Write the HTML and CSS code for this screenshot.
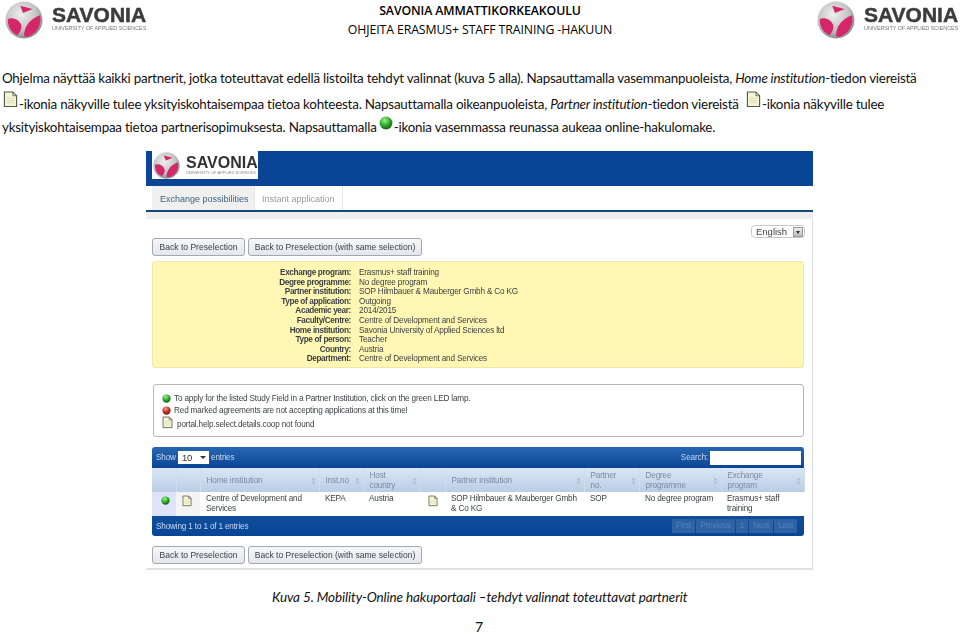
FILE: index.html
```html
<!DOCTYPE html>
<html lang="fi">
<head>
<meta charset="utf-8">
<title>Ohjeita Erasmus+ staff training</title>
<link rel="stylesheet" href="styles.css">
</head>
<body>
<svg class="defs" width="0" height="0" aria-hidden="true">
  <defs>
    <radialGradient id="ball" cx="42%" cy="35%" r="70%">
      <stop offset="0" stop-color="#eeeeee"/>
      <stop offset="0.6" stop-color="#c4c4c4"/>
      <stop offset="1" stop-color="#7f7f7f"/>
    </radialGradient>
    <radialGradient id="led" cx="40%" cy="30%" r="70%">
      <stop offset="0" stop-color="#a5f08a"/>
      <stop offset="0.55" stop-color="#2fae2f"/>
      <stop offset="1" stop-color="#14601f"/>
    </radialGradient>
    <radialGradient id="ledred" cx="40%" cy="30%" r="70%">
      <stop offset="0" stop-color="#f0a090"/>
      <stop offset="0.55" stop-color="#c8362a"/>
      <stop offset="1" stop-color="#701a14"/>
    </radialGradient>
    <symbol id="globe" viewBox="0 0 40 40">
      <circle cx="20" cy="20" r="19.5" fill="url(#ball)"/>
      <path d="M16 5 L29 8.500 L19 12.500 Z" fill="#d6266a"/>
      <path d="M3 19 C8 17 14 19 17 25 C18 29 16 33 13 36 C6 33 2.500 26 3 19 Z" fill="#d6266a"/>
      <path d="M20 37 C20 27 26 19 37 15 C39 24 34 34 24 37.500 Z" fill="#d6266a"/>
    </symbol>
    <symbol id="doc" viewBox="0 0 16 18">
      <path d="M1.500 1 H10.500 L14.500 5 V16.500 H1.500 Z" fill="#f6f5d8" stroke="#55564c" stroke-width="1.200"/>
      <path d="M10.500 1 V5 H14.500 Z" fill="#d8d8b0" stroke="#55564c" stroke-width="0.800"/>
      <path d="M3.500 7.500 H12 M3.500 10 H12 M3.500 12.500 H12" stroke="#d4d3a8" stroke-width="0.800"/>
    </symbol>
    <symbol id="lamp" viewBox="0 0 12 12">
      <circle cx="6" cy="6" r="5.500" fill="url(#led)"/>
    </symbol>
    <symbol id="lampred" viewBox="0 0 12 12">
      <circle cx="6" cy="6" r="5.500" fill="url(#ledred)"/>
    </symbol>
    <symbol id="sort" viewBox="0 0 6 9">
      <path d="M3 0.500 L5.500 3.500 H0.500 Z M3 8.500 L5.500 5.500 H0.500 Z" fill="#a9bcd2"/>
    </symbol>
  </defs>
</svg>

<header class="doc-header">
  <div class="logo">
    <svg class="globe"><use href="#globe"/></svg>
    <div class="logo-text">
      <span class="logo-name">SAVONIA</span>
      <span class="logo-sub">UNIVERSITY OF APPLIED SCIENCES</span>
    </div>
  </div>
  <div class="doc-title">
    <div class="doc-title-main">SAVONIA AMMATTIKORKEAKOULU</div>
    <div class="doc-title-sub">OHJEITA ERASMUS+ STAFF TRAINING -HAKUUN</div>
  </div>
  <div class="logo">
    <svg class="globe"><use href="#globe"/></svg>
    <div class="logo-text">
      <span class="logo-name">SAVONIA</span>
      <span class="logo-sub">UNIVERSITY OF APPLIED SCIENCES</span>
    </div>
  </div>
</header>

<main class="doc-body">
  <p class="intro">
    <span class="line">Ohjelma näyttää kaikki partnerit, jotka toteuttavat edellä listoilta tehdyt valinnat (kuva 5 alla). Napsauttamalla vasemmanpuoleista, <em>Home institution</em>-tiedon viereistä</span>
    <span class="line"><svg class="icon-doc first"><use href="#doc"/></svg>-ikonia näkyville tulee yksityiskohtaisempaa tietoa kohteesta. Napsauttamalla oikeanpuoleista, <em>Partner institution</em>-tiedon viereistä <svg class="icon-doc second"><use href="#doc"/></svg>-ikonia näkyville tulee</span>
    <span class="line">yksityiskohtaisempaa tietoa partnerisopimuksesta. Napsauttamalla <svg class="icon-lamp"><use href="#lamp"/></svg>-ikonia vasemmassa reunassa aukeaa online-hakulomake.</span>
  </p>

  <figure class="figure">
    <div class="shot">
      <div class="shot-banner">
        <div class="shot-logo">
          <svg class="shot-globe"><use href="#globe"/></svg>
          <div class="shot-logo-text">
            <span class="shot-logo-name">SAVONIA</span>
            <span class="shot-logo-sub">UNIVERSITY OF APPLIED SCIENCES</span>
          </div>
        </div>
      </div>
      <nav class="tabs">
        <span class="tab tab-active">Exchange possibilities</span>
        <span class="tab">Instant application</span>
      </nav>
      <div class="tab-rule"></div>

      <div class="panel">
        <div class="lang-row">
          <div class="lang"><span>English</span><span class="lang-btn"></span></div>
        </div>
        <div class="buttons buttons-top">
          <span class="btn btn-a">Back to Preselection</span>
          <span class="btn btn-b">Back to Preselection (with same selection)</span>
        </div>

        <dl class="summary">
          <dt>Exchange program:</dt><dd>Erasmus+ staff training</dd>
          <dt>Degree programme:</dt><dd>No degree program</dd>
          <dt>Partner institution:</dt><dd>SOP Hilmbauer &amp; Mauberger Gmbh &amp; Co KG</dd>
          <dt>Type of application:</dt><dd>Outgoing</dd>
          <dt>Academic year:</dt><dd>2014/2015</dd>
          <dt>Faculty/Centre:</dt><dd>Centre of Development and Services</dd>
          <dt>Home institution:</dt><dd>Savonia University of Applied Sciences ltd</dd>
          <dt>Type of person:</dt><dd>Teacher</dd>
          <dt>Country:</dt><dd>Austria</dd>
          <dt>Department:</dt><dd>Centre of Development and Services</dd>
        </dl>

        <div class="legend">
          <div class="legend-row"><svg class="legend-lamp"><use href="#lamp"/></svg>To apply for the listed Study Field in a Partner Institution, click on the green LED lamp.</div>
          <div class="legend-row"><svg class="legend-lamp"><use href="#lampred"/></svg>Red marked agreements are not accepting applications at this time!</div>
          <div class="legend-row legend-doc"><svg class="legend-docicon"><use href="#doc"/></svg>portal.help.select.details.coop not found</div>
        </div>

        <div class="datatable">
          <div class="dt-top">
            <div class="dt-show">Show <span class="dt-select">10<span class="dt-caret"></span></span> entries</div>
            <div class="dt-search">Search: <span class="dt-input"></span></div>
          </div>
          <table class="dt">
            <colgroup>
              <col class="c1"><col class="c2"><col class="c3"><col class="c4"><col class="c5"><col class="c6"><col class="c7"><col class="c8"><col class="c9"><col class="c10">
            </colgroup>
            <thead>
              <tr>
                <th></th><th></th>
                <th><div class="th-in"><span>Home institution</span><svg class="sort"><use href="#sort"/></svg></div></th>
                <th><div class="th-in"><span>Inst.no</span><svg class="sort"><use href="#sort"/></svg></div></th>
                <th><div class="th-in"><span>Host<br>country</span><svg class="sort"><use href="#sort"/></svg></div></th>
                <th></th>
                <th><div class="th-in"><span>Partner institution</span><svg class="sort"><use href="#sort"/></svg></div></th>
                <th><div class="th-in"><span>Partner<br>no.</span><svg class="sort"><use href="#sort"/></svg></div></th>
                <th><div class="th-in"><span>Degree<br>programme</span><svg class="sort"><use href="#sort"/></svg></div></th>
                <th><div class="th-in"><span>Exchange<br>program</span><svg class="sort"><use href="#sort"/></svg></div></th>
              </tr>
            </thead>
            <tbody>
              <tr>
                <td class="td-lamp"><svg class="row-lamp"><use href="#lamp"/></svg></td>
                <td class="td-doc"><svg class="row-doc"><use href="#doc"/></svg></td>
                <td>Centre of Development and Services</td>
                <td>KEPA</td>
                <td>Austria</td>
                <td class="td-plain"><svg class="row-doc"><use href="#doc"/></svg></td>
                <td>SOP Hilmbauer &amp; Mauberger Gmbh &amp; Co KG</td>
                <td>SOP</td>
                <td>No degree program</td>
                <td>Erasmus+ staff training</td>
              </tr>
            </tbody>
          </table>
          <div class="dt-bottom">
            <div>Showing 1 to 1 of 1 entries</div>
            <div class="pager">
              <span class="pg">First</span><span class="pg">Previous</span><span class="pg">1</span><span class="pg">Next</span><span class="pg">Last</span>
            </div>
          </div>
        </div>

        <div class="buttons buttons-bottom">
          <span class="btn btn-a">Back to Preselection</span>
          <span class="btn btn-b">Back to Preselection (with same selection)</span>
        </div>
      </div>
    </div>
    <figcaption class="caption"><em>Kuva 5. Mobility-Online hakuportaali –tehdyt valinnat toteuttavat partnerit</em></figcaption>
  </figure>
  <div class="page-no">7</div>
</main>
</body>
</html>
```

FILE: styles.css
```css
* { box-sizing: border-box; }
html, body { margin: 0; padding: 0; }
body {
  width: 960px;
  height: 634px;
  overflow: hidden;
  background: #ffffff;
  color: #111111;
  font-family: "Lato", "Open Sans", sans-serif;
}
.defs { display: block; height: 0; }

/* Document header */
.doc-header {
  height: 41px;
  padding: 1px 2px 0 5px;
  display: flex;
  justify-content: space-between;
  align-items: flex-start;
}
.logo { display: flex; align-items: flex-start; gap: 9px; width: 141px; filter: blur(0.35px); }
.globe { width: 38px; height: 38px; flex: none; }
.logo-text { display: flex; flex-direction: column; padding-top: 3px; }
.logo-name {
  font: 700 21px/21px "Liberation Sans", sans-serif;
  color: #3c3c3e;
  -webkit-text-stroke: 0.5px #3c3c3e;
}
.logo-sub {
  font: 400 5.400px/6px "Liberation Sans", sans-serif;
  color: #77777c;
  white-space: nowrap;
}
.doc-title { text-align: center; margin-right: 3px; font-family: "Open Sans", sans-serif; color: #000; }
.doc-title-main { font-size: 12.300px; line-height: 19px; font-weight: 600; letter-spacing: -0.1px; }
.doc-title-sub { font-size: 12.300px; line-height: 19px; letter-spacing: -0.1px; }

/* Body */
.doc-body { padding: 0 2px; }
.intro { margin: 25px 0 0; font-size: 13.400px; letter-spacing: -0.22px; line-height: 24.500px; height: 85px; }
.line { display: block; height: 24.500px; white-space: nowrap; }
.icon-doc { width: 15px; height: 17px; vertical-align: 1px; margin-right: 1px; }
.icon-doc.first { margin-left: 1px; }
.icon-doc.second { margin-left: 4px; }
.icon-lamp { width: 14px; height: 14px; vertical-align: 2px; margin: 0 1px 0 -1px; }

.figure { margin: 0; }
.shot {
  width: 667px;
  height: 421px;
  margin: 0 0 0 144px;
  background: #fff;
  font-family: "Liberation Sans", sans-serif;
  font-size: 8.200px;
  letter-spacing: -0.17px;
  color: #3c3f44;
  filter: blur(0.3px);
}
.shot-banner { height: 35px; background: #0a4595; padding-left: 6px; }
.shot-logo {
  width: 106px; height: 28px; background: #fff;
  display: flex; align-items: center; gap: 6px; padding-left: 1px;
}
.shot-globe { width: 27px; height: 27px; flex: none; }
.shot-logo-text { display: flex; flex-direction: column; overflow: hidden; }
.shot-logo-name { font: 700 16px/15px "Liberation Sans", sans-serif; letter-spacing: 0; color: #333; }
.shot-logo-sub { font: 400 4px/5px "Liberation Sans", sans-serif; letter-spacing: 0; color: #888; white-space: nowrap; }

.tabs { height: 24px; display: flex; padding-left: 6px; background: #fff; }
.tab {
  padding: 1px 7px 0; line-height: 24px; font-size: 9px; letter-spacing: 0; color: #9a9a9a;
  border-right: 1px solid #e6e6e6; white-space: nowrap;
}
.tab-active { width: 103px; padding-left: 8px; background: #f0f0f0; color: #41617f; }
.tab-rule { height: 9px; border-top: 2px solid #134a78; background: #eeeeee; }

.panel {
  height: 351px;
  padding: 0 8px 0 6px;
  border-right: 1px solid #d8d8d8;
  border-bottom: 2px solid #e2e2e2;
}
.lang-row { height: 19px; margin-right: -1px; display: flex; justify-content: flex-end; padding-top: 6px; }
.lang {
  width: 54px; height: 13px; border: 1px solid #c8c8c8; border-radius: 4px;
  display: flex; justify-content: space-between; align-items: center;
  padding: 0 1px 0 4px; font-size: 9.500px; letter-spacing: 0; color: #444;
}
.lang-btn {
  width: 10px; height: 10px; background: linear-gradient(#eee, #bbb); border: 1px solid #999;
  position: relative;
}
.lang-btn::after {
  content: ""; position: absolute; left: 2px; top: 3px;
  border: 2px solid transparent; border-top: 3px solid #333;
}
.buttons { display: flex; gap: 3px; }
.buttons-top { height: 23px; }
.buttons-bottom { margin-top: 10px; }
.btn {
  height: 18px; line-height: 16px; text-align: center; white-space: nowrap;
  border: 1px solid #a4a9b0; border-radius: 3px;
  background: linear-gradient(#f6f7f9, #e3e6ec);
  font-size: 8.560px; letter-spacing: 0; color: #3c3f44;
}
.btn-a { width: 93px; }
.btn-b { width: 174px; }

.summary {
  margin: 0; height: 107px; background: #fff7b3; border: 1px solid #f0e8a8; border-radius: 3px;
  display: grid; grid-template-columns: 198px 1fr; column-gap: 8px;
  grid-auto-rows: 9.620px; padding-top: 6px; line-height: 9.620px;
}
.summary dt { text-align: right; font-weight: 700; white-space: nowrap; letter-spacing: -0.35px; }
.summary dd { margin: 0; white-space: nowrap; }

.legend {
  margin: 16px 0 0 1px; height: 53px; border: 1px solid #b8b8b8; border-radius: 3px;
  padding: 7px 0 0 8px;
}
.legend-row { display: flex; align-items: center; height: 12px; white-space: nowrap; }
.legend-lamp { width: 9px; height: 9px; margin-right: 3px; flex: none; }
.legend-doc { height: 16px; }
.legend-docicon { width: 11px; height: 13px; margin-right: 4px; margin-top: -3px; flex: none; }

.datatable { margin: 10px 0 0; }
.dt-top {
  height: 21px; display: flex; justify-content: space-between; align-items: center;
  padding: 0 3px 0 4px; border-radius: 3px 3px 0 0;
  background: linear-gradient(#2767b2, #0a4595); color: #c9d9ee;
}
.dt-select {
  display: inline-flex; justify-content: space-between; align-items: center;
  width: 31px; height: 13px; background: #fff; color: #333; padding: 0 3px 0 4px; font-size: 9.500px;
  vertical-align: middle;
}
.dt-caret { border: 3px solid transparent; border-top: 3px solid #333; margin-top: 3px; }
.dt-input { display: inline-block; width: 91px; height: 14px; background: #fff; vertical-align: middle; }

.dt { width: 652px; border-collapse: collapse; table-layout: fixed; }
.c1 { width: 24px; } .c2 { width: 24px; } .c3 { width: 119px; } .c4 { width: 44px; }
.c5 { width: 57px; } .c6 { width: 25px; } .c7 { width: 139px; } .c8 { width: 55px; }
.c9 { width: 82px; } .c10 { width: 83px; }
.dt th {
  height: 24px; padding: 1px 3px 0 6px; background: linear-gradient(#dbe6f4, #b9cde5);
  border-right: 1px solid #cfdcec; font-weight: 400; color: #7a8ca3; text-align: left;
  line-height: 10px;
}
.th-in { display: flex; justify-content: space-between; align-items: center; }
.sort { width: 5px; height: 8px; flex: none; }
.dt td {
  height: 24px; padding: 2px 4px 0 6px; vertical-align: top;
  line-height: 9.600px; color: #3c3f44; background: #fff;
}
.dt .td-lamp { background: #dfe3f7; padding: 4px 0 0 9px; }
.dt .td-doc { background: #f4f4f4; padding: 3px 0 0 6px; }
.dt .td-plain { padding: 3px 0 0 8px; }
.row-lamp { width: 9px; height: 9px; display: block; }
.row-doc { width: 10px; height: 12px; display: block; }

.dt-bottom {
  height: 20px; display: flex; justify-content: space-between; align-items: center;
  padding: 0 7px 0 4px; border-radius: 0 0 3px 3px;
  background: linear-gradient(#0f4d9d, #0a4595); color: #c9d9ee;
}
.pager { display: flex; gap: 1px; }
.pg { padding: 0 4px; height: 14px; line-height: 14px; background: #2f62a5; color: #5580b8; }

.caption {
  margin: 16px 0 0; padding-left: 270px; font-size: 13.500px; letter-spacing: -0.1px; line-height: 18px; color: #111;
  white-space: nowrap;
}
.page-no { margin-top: 13px; padding-left: 473px; font-size: 14px; line-height: 16px; }
```
